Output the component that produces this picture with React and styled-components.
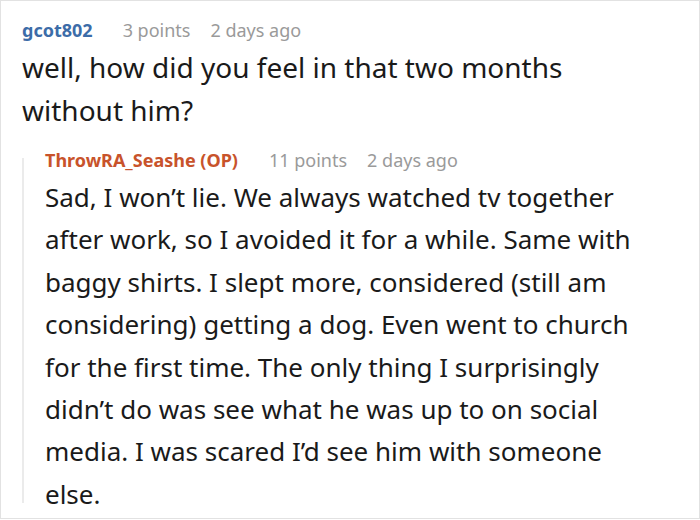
import React from "react";
import styled, { createGlobalStyle } from "styled-components";

const Global = createGlobalStyle`
  html, body {
    margin: 0;
    padding: 0;
    background: #ffffff;
  }
  body {
    font-family: "Noto Sans", "Open Sans", sans-serif;
  }
`;

const comment = {
  user: "gcot802",
  points: "3 points",
  age: "2 days ago",
  text: "well, how did you feel in that two months without him?",
};

const reply = {
  user: "ThrowRA_Seashe (OP)",
  points: "11 points",
  age: "2 days ago",
  text:
    "Sad, I won\u2019t lie. We always watched tv together after work, so I avoided it for a while. Same with baggy shirts. I slept more, considered (still am considering) getting a dog. Even went to church for the first time. The only thing I surprisingly didn\u2019t do was see what he was up to on social media. I was scared I\u2019d see him with someone else.",
};

const App = () => {
  return (
    <>
      <Global />
      <C.Card>
        <C.Comment>
          <C.Meta>
            <C.User $op={false}>{comment.user}</C.User>
            <C.Info>{comment.points}</C.Info>
            <C.Info>{comment.age}</C.Info>
          </C.Meta>
          <C.Body $size={28} $lh={43} $width={560}>
            {comment.text}
          </C.Body>
        </C.Comment>
        <C.Reply>
          <C.Thread />
          <C.ReplyContent>
            <C.Meta>
              <C.User $op={true}>{reply.user}</C.User>
              <C.Info>{reply.points}</C.Info>
              <C.Info>{reply.age}</C.Info>
            </C.Meta>
            <C.Body $size={26} $lh={42.4} $width={612}>
              {reply.text}
            </C.Body>
          </C.ReplyContent>
        </C.Reply>
      </C.Card>
    </>
  );
};

export default App;

const C = {
  Card: styled.div`
    box-sizing: border-box;
    width: 700px;
    height: 519px;
    border: 1px solid #e2e2e2;
    padding: 13px 0 0 21px;
    display: flex;
    flex-direction: column;
    overflow: hidden;
  `,

  Comment: styled.div`
    display: flex;
    flex-direction: column;
  `,

  Meta: styled.div`
    display: flex;
    align-items: baseline;
    gap: 20px;
    height: 32px;
    font-size: 18px;
    line-height: 32px;
  `,

  User: styled.span`
    font-weight: 700;
    color: ${({ $op }) => ($op ? "#c8532b" : "#3c6ca8")};
    margin-right: ${({ $op }) => ($op ? 11 : 10)}px;
  `,

  Info: styled.span`
    color: #9a9a9a;
  `,

  Body: styled.p`
    margin: 0;
    width: ${({ $width }) => $width}px;
    font-size: ${({ $size }) => $size}px;
    line-height: ${({ $lh }) => $lh}px;
    color: #1a1a1a;
  `,

  Reply: styled.div`
    margin-top: 12px;
    display: flex;
    flex-direction: row;
  `,

  Thread: styled.div`
    flex: none;
    width: 2px;
    margin: 14px 0 12px;
    background: #ebebeb;
  `,

  ReplyContent: styled.div`
    display: flex;
    flex-direction: column;
    padding-left: 21px;
  `,
};
